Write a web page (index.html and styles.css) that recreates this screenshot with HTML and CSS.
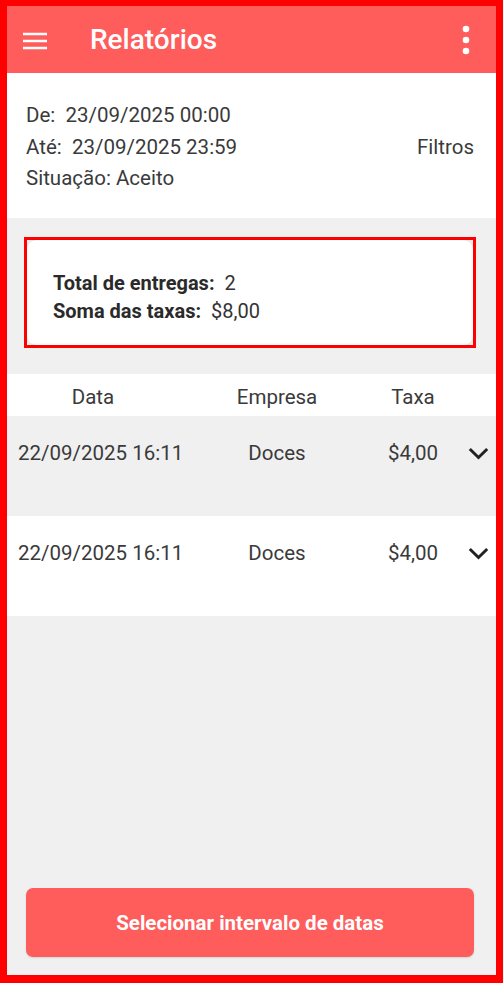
FILE: index.html
```html
<!DOCTYPE html>
<html lang="pt">
<head>
<meta charset="utf-8">
<title>Relatórios</title>
<link rel="stylesheet" href="styles.css">
</head>
<body>
<div class="phone">
  <header class="appbar">
    <svg class="icon-menu" width="24" height="24" viewBox="0 0 24 24"><path d="M0 6h24M0 13h24M0 20h24" stroke="#fff" stroke-width="2.4" fill="none"/></svg>
    <h1 class="title">Relatórios</h1>
    <svg class="icon-more" width="10" height="30" viewBox="0 0 10 30"><circle cx="5" cy="4" r="3.3" fill="#fff"/><circle cx="5" cy="15" r="3.3" fill="#fff"/><circle cx="5" cy="26" r="3.3" fill="#fff"/></svg>
  </header>

  <section class="info">
    <div class="info-lines">
      <div>De:&nbsp; 23/09/2025 00:00</div>
      <div>Até:&nbsp; 23/09/2025 23:59</div>
      <div>Situação: Aceito</div>
    </div>
    <div class="filters">Filtros</div>
  </section>

  <section class="summary-area">
    <div class="summary-outline">
      <div class="summary-card">
        <div><b>Total de entregas:</b>&nbsp; 2</div>
        <div><b>Soma das taxas:</b>&nbsp; $8,00</div>
      </div>
    </div>
  </section>

  <div class="table-head">
    <div class="th th-date">Data</div>
    <div class="th">Empresa</div>
    <div class="th">Taxa</div>
    <div></div>
  </div>

  <div class="row row-alt">
    <div class="td td-date">22/09/2025 16:11</div>
    <div class="td td-center">Doces</div>
    <div class="td td-center">$4,00</div>
    <div class="td"><svg class="chev" width="21" height="13" viewBox="0 0 21 13"><path d="M1.8 2l8.7 8.5L19.2 2" stroke="#222" stroke-width="3" fill="none"/></svg></div>
  </div>
  <div class="row">
    <div class="td td-date">22/09/2025 16:11</div>
    <div class="td td-center">Doces</div>
    <div class="td td-center">$4,00</div>
    <div class="td"><svg class="chev" width="21" height="13" viewBox="0 0 21 13"><path d="M1.8 2l8.7 8.5L19.2 2" stroke="#222" stroke-width="3" fill="none"/></svg></div>
  </div>

  <button class="cta">Selecionar intervalo de datas</button>
</div>
</body>
</html>
```

FILE: styles.css
```css
* { box-sizing: border-box; }
html, body { margin: 0; padding: 0; }
body { font-family: Roboto, "Noto Sans", sans-serif; }

.phone {
  height: 983px;
  border-style: solid;
  border-color: #ff0000;
  border-width: 6px 7px 8px 7px;
  background: #f0f0f0;
  display: flex;
  flex-direction: column;
}

.appbar {
  height: 67px;
  flex: none;
  background: #ff5c5c;
  display: flex;
  align-items: center;
  padding: 0 25px 0 16px;
}
.icon-menu { flex: none; }
.title {
  margin: 0 0 0 43px;
  flex: 1;
  font-size: 28px;
  font-weight: 500;
  color: #fff;
  line-height: 1;
}
.icon-more { flex: none; }

.info {
  height: 145px;
  flex: none;
  background: #fff;
  display: flex;
  align-items: center;
  padding: 4px 22px 0 19px;
  color: #3a3a3a;
  font-size: 20.5px;
}
.info-lines { flex: 1; line-height: 31.5px; }
.filters { line-height: 31.5px; }

.summary-area {
  height: 156px;
  flex: none;
  padding: 19px 20px 26px 17px;
}
.summary-outline {
  height: 111px;
  border: 3px solid #ff0000;
}
.summary-card {
  height: 100%;
  background: #fff;
  border-radius: 9px;
  box-shadow: 0 0 2px rgba(0,0,0,0.15);
  padding: 29px 0 0 26px;
  font-size: 20px;
  line-height: 28px;
  color: #333;
}
.summary-card b { font-weight: 700; color: #2a2a2a; }

.table-head, .row {
  display: grid;
  grid-template-columns: 190px 160px 112px 1fr;
}
.table-head {
  height: 42px;
  flex: none;
  background: #fff;
  align-items: center;
  color: #3a3a3a;
  font-size: 20.5px;
  padding-top: 3px;
}
.th { text-align: center; }
.th-date { padding-right: 18px; }

.row {
  height: 100px;
  flex: none;
  background: #fff;
  align-items: start;
  padding-top: 25px;
  color: #3a3a3a;
  font-size: 20.5px;
}
.row-alt { background: #f0f0f0; }
.td { line-height: 24px; }
.td-date { padding-left: 11px; white-space: nowrap; }
.td-center { text-align: center; }
.chev { display: block; margin: 6px 0 0 -1px; }

.cta {
  margin: auto 22px 18px 19px;
  height: 69px;
  flex: none;
  border: none;
  border-radius: 7px;
  background: #ff5c5c;
  color: #fff;
  font-family: Roboto, "Noto Sans", sans-serif;
  font-size: 20.5px;
  font-weight: 700;
  padding-top: 2px;
  box-shadow: 0 1px 2px rgba(0,0,0,0.12);
}
```
